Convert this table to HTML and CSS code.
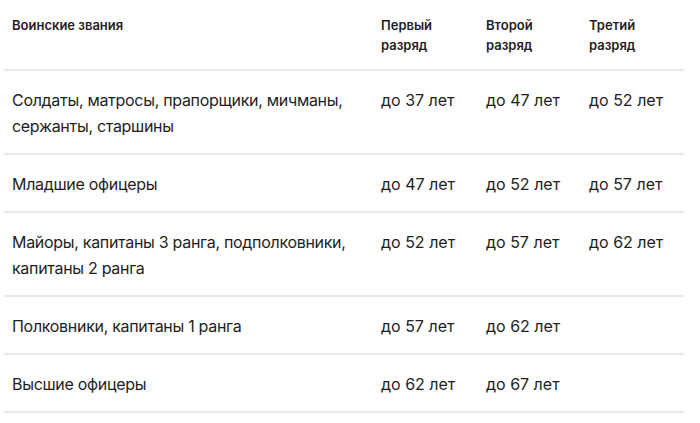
FILE: index.html
```html
<!DOCTYPE html>
<html lang="ru">
<head>
<meta charset="utf-8">
<link rel="stylesheet" href="styles.css">
</head>
<body>
<div class="wrap">
<table class="ranks">
  <colgroup>
    <col class="c1"><col class="c2"><col class="c3"><col class="c4">
  </colgroup>
  <thead>
    <tr>
      <th>Воинские звания</th>
      <th>Первый<br>разряд</th>
      <th>Второй<br>разряд</th>
      <th>Третий<br>разряд</th>
    </tr>
  </thead>
  <tbody>
    <tr>
      <td>Солдаты, матросы, прапорщики, мичманы, сержанты, старшины</td>
      <td>до 37 лет</td>
      <td>до 47 лет</td>
      <td>до 52 лет</td>
    </tr>
    <tr>
      <td>Младшие офицеры</td>
      <td>до 47 лет</td>
      <td>до 52 лет</td>
      <td>до 57 лет</td>
    </tr>
    <tr>
      <td>Майоры, капитаны 3 ранга, подполковники, капитаны 2 ранга</td>
      <td>до 52 лет</td>
      <td>до 57 лет</td>
      <td>до 62 лет</td>
    </tr>
    <tr>
      <td>Полковники, капитаны 1 ранга</td>
      <td>до 57 лет</td>
      <td>до 62 лет</td>
      <td></td>
    </tr>
    <tr>
      <td>Высшие офицеры</td>
      <td>до 62 лет</td>
      <td>до 67 лет</td>
      <td></td>
    </tr>
  </tbody>
</table>
</div>
</body>
</html>
```
FILE: styles.css
```css
html, body {
  margin: 0;
  background: #fff;
}
body {
  font-family: Inter, "Noto Sans", sans-serif;
  color: #1e1e1e;
}
.wrap {
  padding: 0 16px 0 4px;
}
.ranks {
  width: 680px;
  border-collapse: collapse;
  table-layout: fixed;
}
.c1 { width: 369px; }
.c2 { width: 105px; }
.c3 { width: 103px; }
.c4 { width: 103px; }
.ranks th {
  text-align: left;
  vertical-align: top;
  font-size: 13px;
  font-weight: 600;
  line-height: 19.5px;
  padding: 16px 8px 14px 8px;
  border-bottom: 2px solid #e9e9e9;
}
.ranks td {
  vertical-align: top;
  font-size: 16px;
  line-height: 26px;
  padding: 16px 8px 14px 8px;
  border-bottom: 2px solid #e9e9e9;
}
.ranks td:first-child {
  padding-right: 0;
  letter-spacing: -0.3px;
}
```
